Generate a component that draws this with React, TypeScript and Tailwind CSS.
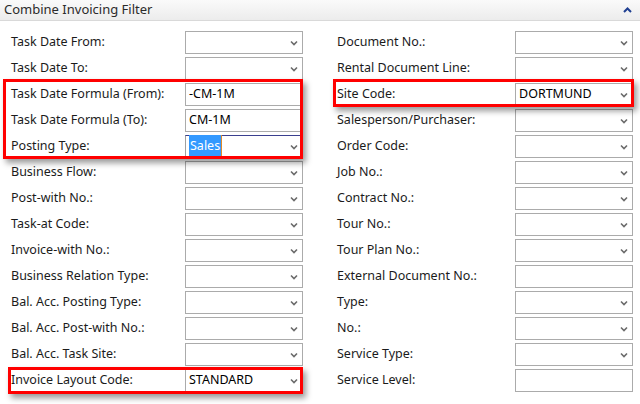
import React from "react";

type Field = { label: string; value?: string; dropdown?: boolean; focused?: boolean; selected?: boolean };

const left: Field[] = [
  { label: "Task Date From:", dropdown: true },
  { label: "Task Date To:", dropdown: true },
  { label: "Task Date Formula (From):", value: "-CM-1M" },
  { label: "Task Date Formula (To):", value: "CM-1M" },
  { label: "Posting Type:", value: "Sales", dropdown: true, focused: true, selected: true },
  { label: "Business Flow:", dropdown: true },
  { label: "Post-with No.:", dropdown: true },
  { label: "Task-at Code:", dropdown: true },
  { label: "Invoice-with No.:", dropdown: true },
  { label: "Business Relation Type:", dropdown: true },
  { label: "Bal. Acc. Posting Type:", dropdown: true },
  { label: "Bal. Acc. Post-with No.:", dropdown: true },
  { label: "Bal. Acc. Task Site:", dropdown: true },
  { label: "Invoice Layout Code:", value: "STANDARD", dropdown: true },
];

const right: Field[] = [
  { label: "Document No.:", dropdown: true },
  { label: "Rental Document Line:", dropdown: true },
  { label: "Site Code:", value: "DORTMUND", dropdown: true },
  { label: "Salesperson/Purchaser:", dropdown: true },
  { label: "Order Code:", dropdown: true },
  { label: "Job No.:", dropdown: true },
  { label: "Contract No.:", dropdown: true },
  { label: "Tour No.:", dropdown: true },
  { label: "Tour Plan No.:", dropdown: true },
  { label: "External Document No.:" },
  { label: "Type:", dropdown: true },
  { label: "No.:", dropdown: true },
  { label: "Service Type:", dropdown: true },
  { label: "Service Level:" },
];

function ChevronDown() {
  return (
    <svg width="8" height="6" viewBox="0 0 8 6" className="shrink-0">
      <path d="M1 1.5 L4 4.5 L7 1.5" fill="none" stroke="#6b6b6b" strokeWidth="1.6" />
    </svg>
  );
}

function Row({ f, labelW }: { f: Field; labelW: string }) {
  return (
    <div className="flex h-[23px] mb-[3px] items-center">
      <div className={`${labelW} shrink-0 text-[12.5px] text-[#1b1b1b] leading-none`}>{f.label}</div>
      <div
        className={`w-[118px] h-[23px] flex items-center pl-[3px] pr-[4px] border bg-white ${
          f.focused ? "border-[#a0a0a0] border-t-[#3b3f8f]" : "border-[#ababab]"
        }`}
      >
        <span className="flex-1 text-[12.5px] text-black leading-none">
          {f.selected ? (
            <span className="bg-[#3399ff] text-white px-[1px] py-[2px] border-r border-[#e08a2a]">{f.value}</span>
          ) : (
            f.value
          )}
        </span>
        {f.dropdown && <ChevronDown />}
      </div>
    </div>
  );
}

export default function App() {
  return (
    <div className="relative w-[640px] h-[404px] bg-white overflow-hidden font-['Segoe_UI','Noto_Sans',sans-serif]">
      {/* HEADER */}
      <div className="h-[21px] flex items-center justify-between pl-[4px] pr-[8px] border-b border-[#d9d9d9] bg-gradient-to-b from-[#fafafa] to-[#ececec]">
        <span className="text-[13px] text-[#2b2b2b]">Combine Invoicing Filter</span>
        <svg width="9" height="6" viewBox="0 0 9 6">
          <path d="M1 5 L4.5 1.5 L8 5" fill="none" stroke="#1f3f91" strokeWidth="2" />
        </svg>
      </div>

      {/* FIELDS */}
      <div className="flex pt-[10px]">
        <div className="pl-[11px] w-[326px]">
          {left.map((f) => (
            <Row key={f.label} f={f} labelW="w-[174px]" />
          ))}
        </div>
        <div className="pl-[11px]">
          {right.map((f) => (
            <Row key={f.label} f={f} labelW="w-[178px]" />
          ))}
        </div>
      </div>

      {/* highlight annotations */}
      <div className="absolute left-[3px] top-[79px] w-[300px] h-[80px] border-[3px] border-[#ff0000] shadow-[3px_4px_6px_rgba(0,0,0,0.4)]" />
      <div className="absolute left-[333px] top-[79px] w-[301px] h-[28px] border-[3px] border-[#ff0000] shadow-[3px_4px_6px_rgba(0,0,0,0.4)]" />
      <div className="absolute left-[8px] top-[367px] w-[295px] h-[27px] border-[3px] border-[#ff0000] shadow-[3px_4px_6px_rgba(0,0,0,0.4)]" />
    </div>
  );
}
